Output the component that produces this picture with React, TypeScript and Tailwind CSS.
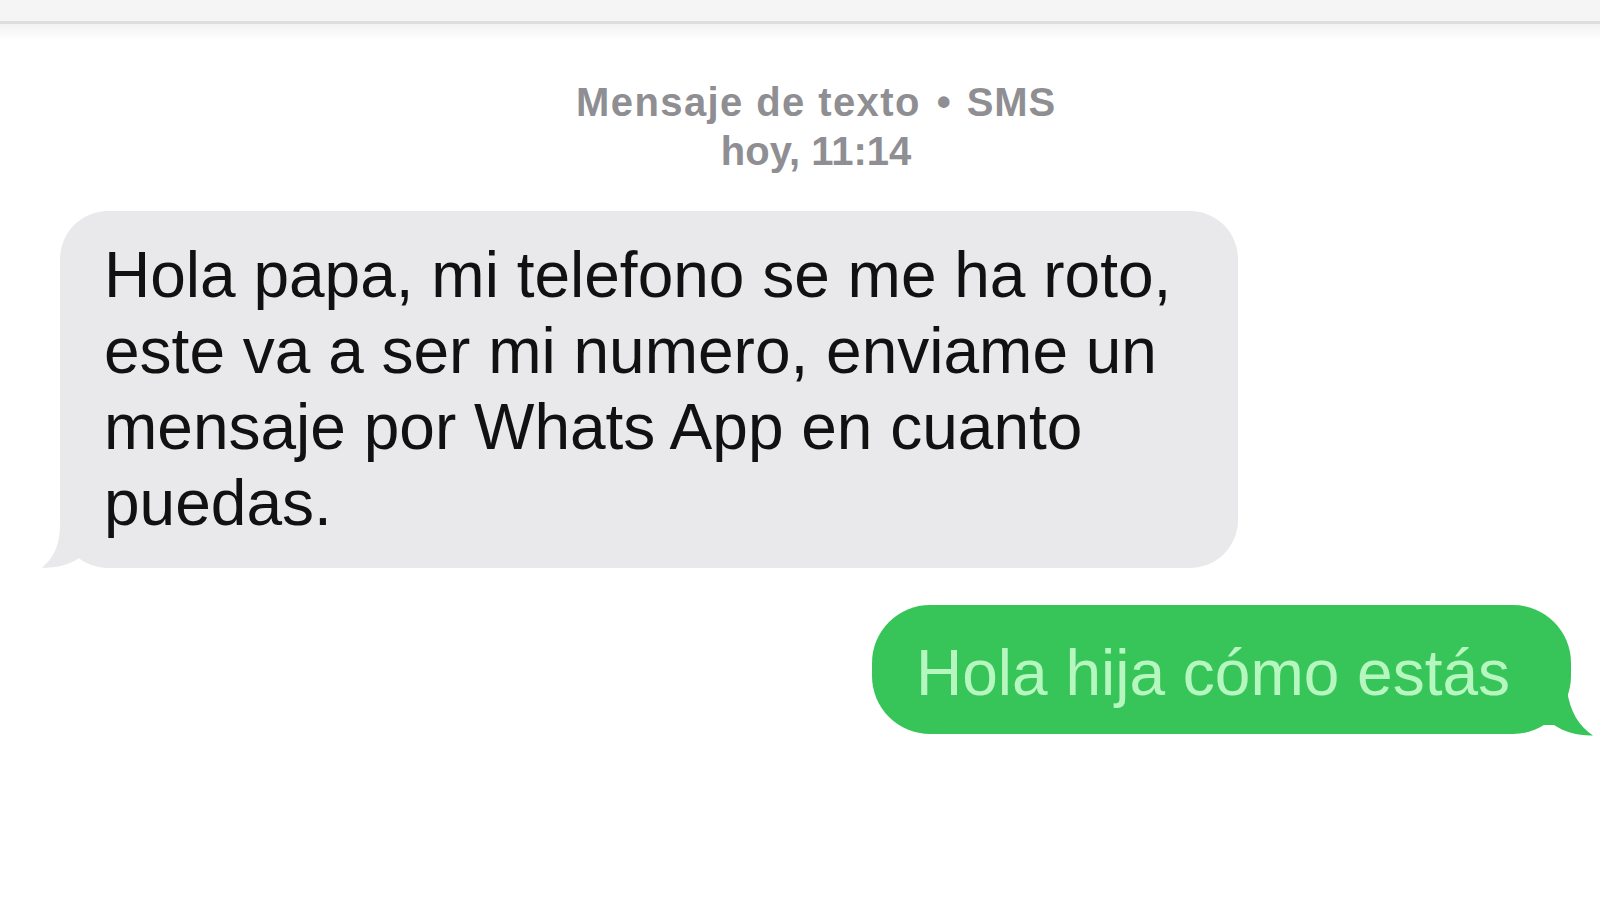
import React from "react";

export default function App() {
  return (
    <div className="w-[1600px] h-[897px] overflow-hidden bg-white font-['Liberation_Sans',Arial,sans-serif]">
      <div className="h-[24px] bg-[#f5f5f5] border-b-[3px] border-[#dedede]" />
      <div className="h-[16px] bg-gradient-to-b from-[#f2f2f2] to-white" />

      <div className="mt-[38px] flex flex-col items-center pl-[32px] text-[40px] leading-[49px] font-bold text-[#8e8e93]">
        <div className="flex items-center whitespace-nowrap">
          <span className="tracking-[1.4px]">Mensaje de texto</span>
          <span className="ml-[16px] mr-[16px]">•</span>
          <span className="tracking-[0.8px]">SMS</span>
        </div>
        <div className="whitespace-nowrap">hoy, 11:14</div>
      </div>

      <div className="mt-[35px] pl-[60px]">
        <div className="relative w-[1178px] rounded-[48px] bg-[#e9e9eb] pt-[26px] pb-[27px] pl-[44px] text-[64px] leading-[76px] text-[#111111]">
          <svg
            className="absolute left-[-18px] bottom-0"
            width="60"
            height="44"
            viewBox="0 0 60 44"
          >
            <path
              d="M18 0 C18 20 12 34 0 43.5 C13 44.5 27 41 37 34 L60 34 L60 0 Z"
              fill="#e9e9eb"
            />
          </svg>
          <div className="relative whitespace-nowrap">Hola papa, mi telefono se me ha roto,</div>
          <div className="relative whitespace-nowrap">este va a ser mi numero, enviame un</div>
          <div className="relative whitespace-nowrap">mensaje por Whats App en cuanto</div>
          <div className="relative whitespace-nowrap">puedas.</div>
        </div>
      </div>

      <div className="mt-[37px] flex justify-end pr-[29px]">
        <div className="relative w-[699px] rounded-[58px] bg-[#37c55a] pt-[30px] pb-[23px] pl-[44px] text-[64px] leading-[76px] text-[#b6f6bf]">
          <svg
            className="absolute right-[-22px] bottom-[-2px]"
            width="64"
            height="46"
            viewBox="0 0 64 46"
          >
            <path
              d="M38 0 C41 22 50 36 64 45.5 C50 46 35 42 25 35 L0 35 L0 0 Z"
              fill="#37c55a"
            />
          </svg>
          <div className="relative whitespace-nowrap">Hola hija cómo estás</div>
        </div>
      </div>
    </div>
  );
}
